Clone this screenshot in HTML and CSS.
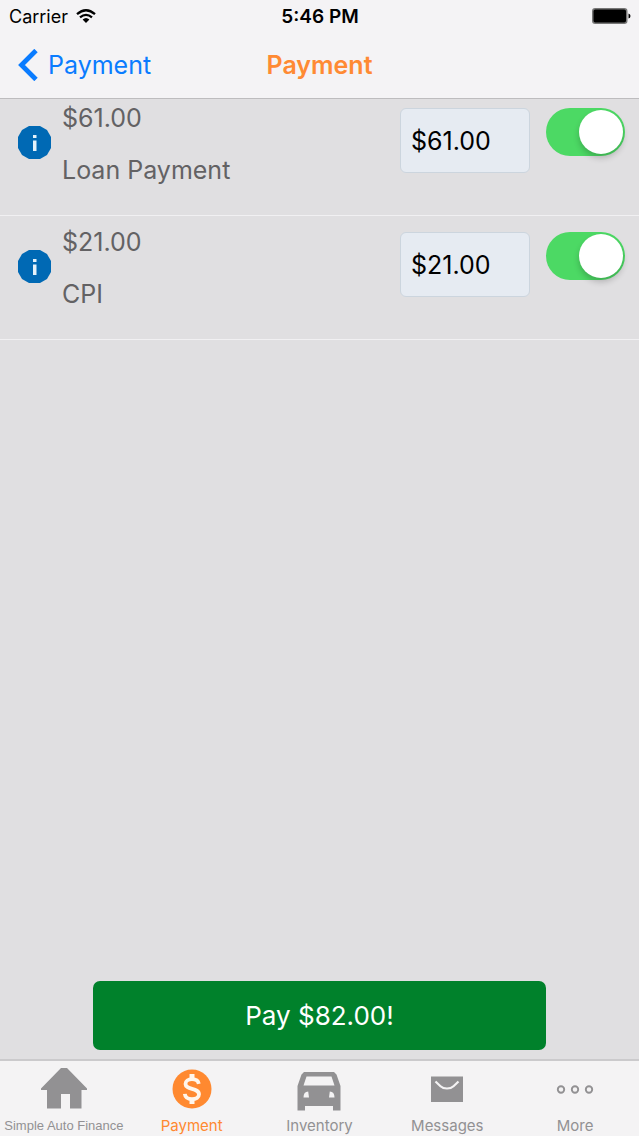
FILE: index.html
```html
<!DOCTYPE html>
<html lang="en">
<head>
<meta charset="utf-8">
<meta name="viewport" content="width=device-width, initial-scale=1">
<title>Payment</title>
<link rel="stylesheet" href="styles.css">
</head>
<body>
<div class="app">
  <header class="header">
    <div class="status">
      <div class="status-left">
        <span>Carrier</span>
        <svg class="wifi" viewBox="0 0 20 14" aria-hidden="true">
          <path d="M1 5.2Q10-2.6 19 5.2M4 8.4Q10 3.4 16 8.4" fill="none" stroke="currentColor" stroke-width="2.3"/>
          <path d="M6.6 10.6Q10 7.6 13.4 10.6L10 14Z" fill="currentColor"/>
        </svg>
      </div>
      <span class="clock">5:46 PM</span>
      <div class="status-right">
        <svg class="battery" viewBox="0 0 39 16" aria-hidden="true">
          <rect x=".75" y=".75" width="34" height="14.5" rx="2.5" fill="#000" stroke="#777" stroke-width="1.5"/>
          <path d="M36.500 5.500q2 .5 2 2.500t-2 2.500z" fill="#000"/>
        </svg>
      </div>
    </div>
    <nav class="navbar">
      <a class="back" href="#">
        <svg class="chevron" viewBox="0 0 20 32" aria-hidden="true"><path d="M18 1.500L3.500 16l14.500 14.500" fill="none" stroke="currentColor" stroke-width="4.800"/></svg>
        <span>Payment</span>
      </a>
      <h1 class="title">Payment</h1>
    </nav>
  </header>

  <main class="content">
    <ul class="list">
      <li class="row">
        <button class="info" type="button" aria-label="About Loan Payment">
          <svg viewBox="0 0 33 33" aria-hidden="true"><path d="M11 0h11l7 4 4 7v11l-4 7-7 4H11l-7-4-4-7V11l4-7z" fill="#0069b4"/><path d="M15 9h3.500v3H15zM15 14.500h3.500V25H15z" fill="#e4f2fa"/></svg>
        </button>
        <label class="item" for="loan"><span>$61.00</span><span>Loan Payment</span></label>
        <input class="amount" id="loan" type="text" value="$61.00">
        <input class="switch" type="checkbox" role="switch" aria-label="Include Loan Payment" checked>
      </li>
      <li class="row">
        <button class="info" type="button" aria-label="About CPI">
          <svg viewBox="0 0 33 33" aria-hidden="true"><path d="M11 0h11l7 4 4 7v11l-4 7-7 4H11l-7-4-4-7V11l4-7z" fill="#0069b4"/><path d="M15 9h3.500v3H15zM15 14.500h3.500V25H15z" fill="#e4f2fa"/></svg>
        </button>
        <label class="item" for="cpi"><span>$21.00</span><span>CPI</span></label>
        <input class="amount" id="cpi" type="text" value="$21.00">
        <input class="switch" type="checkbox" role="switch" aria-label="Include CPI" checked>
      </li>
    </ul>
    <div class="action"><button class="pay" type="button">Pay $82.00!</button></div>
  </main>

  <nav class="tabs">
    <a class="tab tab-long" href="#">
      <svg width="48" height="42" viewBox="0 0 48 42" aria-hidden="true"><path d="M21 0h6l20 20.500V22h-5.500v18.500H30V26h-9v14.500H7V22H1v-1.500z" fill="currentColor"/></svg>
      <span>Simple Auto Finance</span>
    </a>
    <a class="tab tab-active" href="#" aria-current="page">
      <svg width="40" height="40" viewBox="0 0 40 40" aria-hidden="true"><circle cx="20" cy="20" r="19.500" fill="currentColor"/><path d="M26.800 14.800c-.6-3.200-3-4.600-6.800-4.600-3.800 0-6.500 1.900-6.500 4.700 0 6.200 13.500 3.600 13.500 10.400 0 3-2.800 4.800-7 4.800-4 0-6.800-1.700-7.200-5.200" fill="none" stroke="#fff6ec" stroke-width="3.800"/><path d="M17.500 5h5v5.500h-5zM17.500 29.500h5V35h-5z" fill="#fff6ec"/></svg>
      <span>Payment</span>
    </a>
    <a class="tab" href="#">
      <svg width="44" height="44" viewBox="0 0 44 44" aria-hidden="true"><path fill-rule="evenodd" d="M7 5h30l2.500 2.500L43.500 19v24.500H36V39H8v4.500H.5V19l4-11.500zM9.500 9.500L6.500 18.500h31L34.500 9.500zM6.500 30.500h5.500l-.8-6q-4.700 0-4.700 6zM37.500 30.500H32l.8-6q4.700 0 4.700 6z" fill="currentColor"/></svg>
      <span>Inventory</span>
    </a>
    <a class="tab" href="#">
      <svg width="32" height="26" viewBox="0 0 32 26" aria-hidden="true"><path d="M0 .5h32V26H0z" fill="currentColor"/><path d="M4.500 5.500l5 4.700Q12 12.500 16 12.500t6.500-2.300l5-4.700" fill="none" stroke="#f4f3f4" stroke-width="2.200"/></svg>
      <span>Messages</span>
    </a>
    <a class="tab" href="#">
      <svg width="38" height="10" viewBox="0 0 38 10" aria-hidden="true"><g fill="none" stroke="currentColor" stroke-width="1.900"><circle cx="5" cy="5.500" r="3.200"/><circle cx="19" cy="5.500" r="3.200"/><circle cx="33" cy="5.500" r="3.200"/></g></svg>
      <span>More</span>
    </a>
  </nav>
</div>
</body>
</html>
```

FILE: styles.css
```css
* { box-sizing: border-box; }
body {
  margin: 0;
  font-family: Inter, "Liberation Sans", sans-serif;
  background: #e0dfe1;
}
a { color: inherit; text-decoration: none; }
svg { display: block; }
.app { min-height: 100vh; display: flex; flex-direction: column; }

.header { background: #f4f3f5; border-bottom: 1px solid #bdbcbe; }
.status {
  display: grid;
  grid-template-columns: 1fr auto 1fr;
  align-items: center;
  height: 32px;
  padding: 0 8px 0 9px;
  font-size: 18px;
}
.status-left { display: flex; align-items: center; gap: 8px; }
.status-right { display: flex; justify-content: flex-end; }
.wifi { width: 20px; height: 14px; }
.battery { width: 39px; height: 16px; }
.clock { font-size: 19px; font-weight: 600; }
.navbar {
  display: grid;
  grid-template-columns: 1fr auto 1fr;
  align-items: center;
  height: 66px;
  padding: 0 18px;
  font-size: 25px;
}
.back { display: flex; align-items: center; gap: 10px; color: #0a7cff; }
.chevron { width: 20px; height: 32px; }
.title { margin: 0; font-size: 25px; font-weight: 600; color: #ff8a33; }

.content { flex: 1; display: flex; flex-direction: column; overflow: hidden; }
.list { list-style: none; margin: -7px 0 0; padding: 0; }
.row {
  display: flex;
  align-items: flex-start;
  height: 124px;
  padding: 0 14px 0 18px;
  border-bottom: 1px solid #f1f0f2;
}
.info { width: 33px; height: 33px; margin: 34px 11px 0 0; padding: 0; border: 0; background: none; }
.item { flex: 1; display: flex; flex-direction: column; font-size: 25px; line-height: 52px; color: #636264; }
.amount {
  width: 130px;
  height: 65px;
  margin: 16px 16px 0 0;
  padding: 0 10px;
  border: 1px solid #ccd5de;
  border-radius: 6px;
  background: #e6ebf2;
  font-family: inherit;
  font-size: 25px;
  color: #000;
}
.switch {
  appearance: none;
  display: flex;
  justify-content: flex-end;
  width: 79px;
  height: 48px;
  margin: 16px 0 0;
  padding: 2px;
  border-radius: 24px;
  background: #4cd964;
}
.switch::before {
  content: "";
  width: 44px;
  height: 44px;
  border-radius: 50%;
  background: #fff;
  box-shadow: 0 4px 6px rgba(0, 0, 0, 0.2);
}
.switch:not(:checked) { justify-content: flex-start; background: #c8c8ca; }

.action { display: flex; justify-content: center; margin-top: auto; padding-bottom: 9px; }
.pay {
  width: 71%;
  height: 69px;
  border: 0;
  border-radius: 7px;
  background: #00812b;
  color: #fff;
  font-family: inherit;
  font-size: 26px;
}

.tabs {
  display: grid;
  grid-template-columns: repeat(5, minmax(0, 1fr));
  height: 77px;
  border-top: 2px solid #cbcacc;
  background: #f4f3f4;
  color: #929193;
}
.tab {
  display: grid;
  grid-template-rows: 56px 18px;
  justify-items: center;
  align-items: center;
  font-size: 15px;
  line-height: 18px;
  white-space: nowrap;
}
.tab-active { color: #ff8930; }
.tab-long { font-family: "Liberation Sans", sans-serif; font-size: 13px; }
```
